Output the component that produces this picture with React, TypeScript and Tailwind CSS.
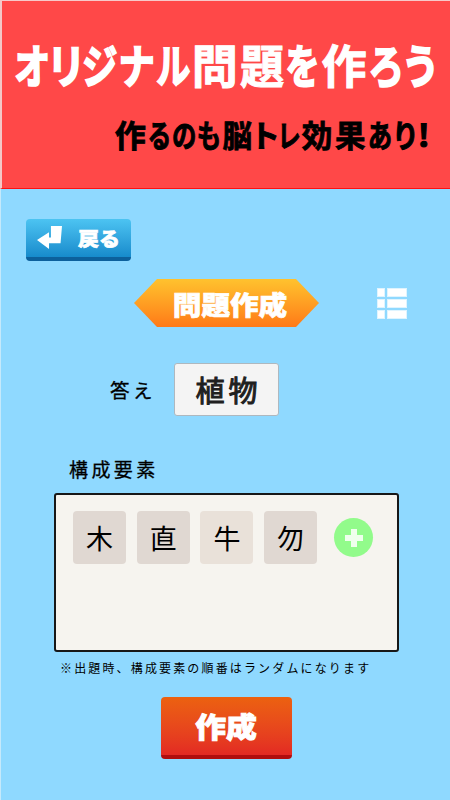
import type { ReactNode } from 'react';

import clsx from 'clsx';

type Glyph = { char: string; width: number; scale: number; kanji?: boolean };

// Proportional headline lettering: kana are set narrower than kanji.
const TITLE: Glyph[] = [
  { char: 'オ', width: 37, scale: 0.78 },
  { char: 'リ', width: 31, scale: 0.84 },
  { char: 'ジ', width: 37, scale: 0.77 },
  { char: 'ナ', width: 37, scale: 0.79 },
  { char: 'ル', width: 36.5, scale: 0.74 },
  { char: '問', width: 46.5, scale: 1, kanji: true },
  { char: '題', width: 47.5, scale: 0.96, kanji: true },
  { char: 'を', width: 34, scale: 0.74 },
  { char: '作', width: 48.5, scale: 0.98, kanji: true },
  { char: 'ろ', width: 36, scale: 0.78 },
  { char: 'う', width: 33, scale: 0.82 },
];

const SUBTITLE: Glyph[] = [
  { char: '作', width: 33, scale: 1.02, kanji: true },
  { char: 'る', width: 24, scale: 0.78 },
  { char: 'の', width: 25.5, scale: 0.8 },
  { char: 'も', width: 24.5, scale: 0.8 },
  { char: '脳', width: 33, scale: 0.97, kanji: true },
  { char: 'ト', width: 24, scale: 0.98 },
  { char: 'レ', width: 22, scale: 0.76 },
  { char: '効', width: 34, scale: 1, kanji: true },
  { char: '果', width: 32.5, scale: 1, kanji: true },
  { char: 'あ', width: 26.5, scale: 0.8 },
  { char: 'り', width: 24, scale: 0.88 },
  { char: '!', width: 13, scale: 1.1 },
];

const PARTS = [
  { char: '木', tone: 'bg-[#e0d8d2]' },
  { char: '直', tone: 'bg-[#e0d8d2]' },
  { char: '牛', tone: 'bg-[#e9e1d9]' },
  { char: '勿', tone: 'bg-[#e0d8d2]' },
];

export default function App() {
  return (
    <div className="flex h-[800px] w-[450px] flex-col overflow-hidden bg-[#8fd9ff] font-['Noto_Sans_CJK_JP',sans-serif] text-black">
      <Banner />
      <main className="flex-1 border-l border-[#c5e9fb]">
        <div className="pt-[30px] pl-[25px]">
          <BackButton />
        </div>
        <TitleRow />
        <AnswerRow />
        <PartsSection />
        <div className="mt-[20px] pl-[160px]">
          <CreateButton />
        </div>
      </main>
    </div>
  );
}

const Banner = () => {
  return (
    <header className="h-[189px] shrink-0 border-t border-b border-l-2 border-t-[#f7c9c9] border-b-[#ff1111] border-l-[#f3c8c8] bg-[#ff4848]">
      <h1 className="flex h-[66px] pt-[29px] pl-[11px] text-[46px] leading-[66px] font-bold text-white">
        <Lettering glyphs={TITLE} kanaStroke="[-webkit-text-stroke:2px_white]" kanjiStroke="[-webkit-text-stroke:1px_white]" />
      </h1>
      <p className="mt-[46px] flex pl-[112px] text-[30.5px] leading-[42px] font-bold">
        <Lettering glyphs={SUBTITLE} kanaStroke="[-webkit-text-stroke:1px_black]" kanjiStroke="[-webkit-text-stroke:0.8px_black]" />
      </p>
    </header>
  );
};

const Lettering = ({ glyphs, kanaStroke, kanjiStroke }: { glyphs: Glyph[]; kanaStroke: string; kanjiStroke: string }) => {
  return (
    <>
      {glyphs.map((glyph, index) => (
        <span key={index} className="flex shrink-0 justify-center" style={{ width: glyph.width }}>
          <span
            className={clsx('shrink-0 [font-feature-settings:"palt"]', glyph.kanji ? kanjiStroke : kanaStroke)}
            style={{ transform: `scaleX(${glyph.scale})` }}
          >
            {glyph.char}
          </span>
        </span>
      ))}
    </>
  );
};

const BackButton = () => {
  return (
    <button className="flex h-[42px] w-[105px] items-center rounded-[4px] border-b-4 border-[#0c609c] bg-linear-to-b from-[#4cc4f2] to-[#168bcc] pb-[2px] pl-[11px] text-white">
      <svg width="25" height="25" viewBox="0 0 26 26" fill="currentColor">
        <path d="M14.5 1H26L24.5 19H12.5V25L0 15.5L12.5 7.5V13H14.5Z" />
      </svg>
      <span className="ml-[16px] origin-left scale-x-110 text-[19px] leading-none font-black [-webkit-text-stroke:0.7px_white]">
        戻る
      </span>
    </button>
  );
};

const TitleRow = () => {
  return (
    <div className="mt-[18px] flex items-center pl-[133px]">
      <h2 className="flex h-12 w-[185px] items-center justify-center bg-linear-to-b from-[#ffc22e] to-[#ff7917] pl-[7px] text-[26px] leading-none font-black text-white [-webkit-text-stroke:0.7px_white] [clip-path:polygon(23px_0,162px_0,100%_50%,162px_100%,23px_100%,0_50%)]">
        <span className="scale-x-110 pt-px">問題作成</span>
      </h2>
      <ListIcon />
    </div>
  );
};

const ListIcon = () => {
  return (
    <div className="ml-[58px] grid grid-cols-[8px_20px] gap-x-[2px] gap-y-[2px]">
      {[0, 1, 2].map((row) => (
        <div key={row} className="contents">
          <div className="h-[9px] border border-[#dff4ff] bg-white" />
          <div className="h-[9px] border border-[#dff4ff] bg-white" />
        </div>
      ))}
    </div>
  );
};

const AnswerRow = () => {
  return (
    <div className="mt-[36px] flex items-center pl-[109px]">
      <span className="w-[64px] pt-px text-[19.5px] leading-none tracking-[3.5px] [-webkit-text-stroke:0.3px_black]">
        答え
      </span>
      <div className="flex h-[53px] w-[105px] items-center justify-center rounded-[3px] border border-[#aeb8bf] bg-[#f4f4f4] pl-1 text-[29px] leading-none tracking-[4px] text-[#202020] [-webkit-text-stroke:1px_#202020]">
        植物
      </div>
    </div>
  );
};

const PartsSection = () => {
  return (
    <section className="mt-[43px] pl-[53px]">
      <h3 className="ml-[15px] text-[19px] leading-[20px] tracking-[3.4px] [-webkit-text-stroke:0.3px_black]">構成要素</h3>
      <div className="mt-[14px] flex h-[159px] w-[345px] items-start rounded-[3px] border-2 border-[#171717] bg-[#f6f4ef] pt-4 pl-[17px]">
        <div className="flex gap-[10.7px]">
          {PARTS.map((part) => (
            <Tile key={part.char} tone={part.tone}>
              {part.char}
            </Tile>
          ))}
        </div>
        <button className="mt-[7px] ml-[17px] flex size-[39px] items-center justify-center rounded-full bg-[#92fb8b]">
          <svg width="18" height="18" viewBox="0 0 18 18" fill="#efffed">
            <path d="M6 0h6v6h6v6h-6v6H6v-6H0V6h6z" />
          </svg>
        </button>
      </div>
      <p className="mt-[7px] ml-[6px] text-[12px] leading-[18px] tracking-[2.15px] whitespace-nowrap">
        ※出題時、構成要素の順番はランダムになります
      </p>
    </section>
  );
};

const Tile = ({ tone, children }: { tone: string; children: ReactNode }) => {
  return (
    <div className={clsx('flex size-[53px] items-center justify-center rounded-[4px] pb-px text-[27px] leading-none', tone)}>
      {children}
    </div>
  );
};

const CreateButton = () => {
  return (
    <button className="flex h-[62px] w-[131px] items-center justify-center rounded-[4px] border-b-4 border-[#b00d0e] bg-linear-to-b from-[#ec610f] to-[#e32923] text-[28px] leading-none font-black text-white [-webkit-text-stroke:0.9px_white]">
      <span className="scale-x-110">作成</span>
    </button>
  );
};
